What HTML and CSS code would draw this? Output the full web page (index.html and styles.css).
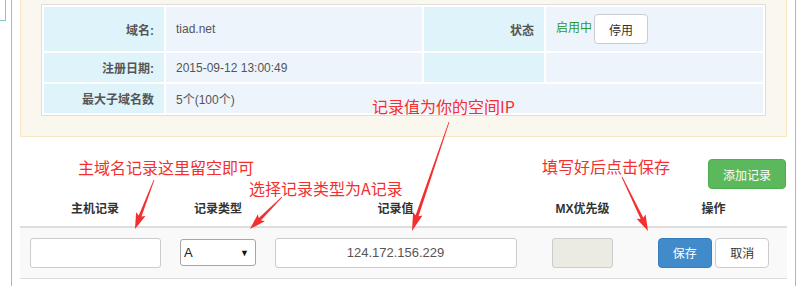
FILE: index.html
```html
<!DOCTYPE html>
<html lang="zh">
<head>
    <meta charset="UTF-8">
    <title>域名解析</title>
    <link rel="stylesheet" href="styles.css">
</head>
<body>
    <div class="page">
        <!-- 左侧边线 -->
        <div class="gutter"><div class="stub"></div></div>

        <div class="main">
            <!-- 域名信息 -->
            <div class="panel">
                <table class="info">
                    <tr class="tall">
                        <th class="c1">域名:</th>
                        <td class="c2">tiad.net</td>
                        <th class="c3">状态</th>
                        <td class="c4"><span class="on">启用中</span><button class="btn btn-default">停用</button></td>
                    </tr>
                    <tr>
                        <th>注册日期:</th>
                        <td>2015-09-12 13:00:49</td>
                        <th></th>
                        <td></td>
                    </tr>
                    <tr>
                        <th>最大子域名数</th>
                        <td colspan="3">5个(100个)</td>
                    </tr>
                </table>
            </div>

            <!-- 解析记录 -->
            <div class="toolbar">
                <button class="btn btn-success">添加记录</button>
            </div>
            <table class="records">
                <thead>
                    <tr>
                        <th class="r1">主机记录</th>
                        <th class="r2">记录类型</th>
                        <th class="r3">记录值</th>
                        <th class="r4">MX优先级</th>
                        <th class="r5">操作</th>
                    </tr>
                </thead>
                <tbody>
                    <tr>
                        <td><input type="text" class="field host"></td>
                        <td><div class="select"><span>A</span><span class="caret">▼</span></div></td>
                        <td><input type="text" class="field value" value="124.172.156.229"></td>
                        <td><input type="text" class="field mx" disabled></td>
                        <td>
                            <button class="btn btn-primary">保存</button>
                            <button class="btn btn-default">取消</button>
                        </td>
                    </tr>
                </tbody>
            </table>
        </div>
        <div class="edge"></div>

        <!-- 标注 -->
        <div class="note n1">记录值为你的空间IP</div>
        <div class="note n2">主域名记录这里留空即可</div>
        <div class="note n3">选择记录类型为A记录</div>
        <div class="note n4">填写好后点击保存</div>
        <svg class="arrows" width="796" height="286" viewBox="0 0 796 286">
            <polygon points="449.4,122.1 418.6,216.3 422.5,215.6 412,231 413.1,212.3 415.6,215.3 448.6,121.9"/>
            <polygon points="154.4,180.1 141.5,216.5 145.5,215.9 135,229 136.1,212.3 138.7,215.4 153.6,179.9"/>
            <polygon points="282.3,197.3 261,220.2 264.8,221.2 250,229 257.8,214.2 258.8,218 281.7,196.7"/>
            <polygon points="622.4,176.8 643.3,217.7 645.6,214.4 648,231 636.6,218.8 640.6,219 621.6,177.2"/>
        </svg>
    </div>
</body>
</html>
```

FILE: styles.css
```css
* {
    margin: 0;
    padding: 0;
    box-sizing: border-box;
}

body {
    font-family: 'Liberation Sans', 'Noto Sans CJK SC', sans-serif;
    font-size: 12px;
    color: #555;
    background: #fff;
    width: 796px;
    height: 286px;
    overflow: hidden;
}

.page {
    position: relative;
    display: flex;
    height: 286px;
}

/* 左右边线 */
.gutter {
    width: 12px;
    border-right: 1px solid #88c4cc;
}

.stub {
    width: 6px;
    height: 21px;
    border-right: 1px solid #88c4cc;
    border-bottom: 1px solid #88c4cc;
}

.edge {
    width: 1px;
    background: #88c4cc;
}

.main {
    flex: 1;
    padding: 0 8px;
}

/* 域名信息面板 */
.panel {
    background: #faf7ef;
    border: 1px solid #fbe6c4;
    border-top: none;
    padding: 4px 20px 20px 20px;
}

.info {
    width: 725px;
    background: #fff;
    border: 1px solid #dedede;
    border-spacing: 2px;
}

.info th,
.info td {
    height: 29px;
    padding: 0 10px;
    font-size: 12px;
}

.info tr.tall th,
.info tr.tall td {
    height: 44px;
}

.info th {
    background: #dff3fb;
    color: #555;
    text-align: right;
    font-weight: bold;
}

.info td {
    background: #eef4fc;
    color: #555;
    text-align: left;
}

.info .c1 { width: 120px; }
.info .c2 { width: 256px; }
.info .c3 { width: 120px; }
.info .c4 { width: 217px; }

.on {
    color: #2f962f;
    margin-right: 2px;
}

/* 按钮 */
.btn {
    display: inline-block;
    height: 30px;
    padding: 0 14px;
    border: 1px solid #ccc;
    border-radius: 4px;
    background: #fff;
    color: #333;
    font-family: 'Liberation Sans', 'Noto Sans CJK SC', sans-serif;
    font-size: 12px;
    vertical-align: middle;
    cursor: pointer;
}

.btn-success {
    width: 78px;
    padding: 0;
    background: #5cb85c;
    border-color: #4cae4c;
    color: #fff;
}

.btn-primary {
    background: #428bca;
    border-color: #357ebd;
    color: #fff;
}

.btn + .btn {
    margin-left: 0;
}

.records .btn {
    width: 54px;
    padding: 0;
}

.toolbar {
    display: flex;
    justify-content: flex-end;
    padding: 22px 1px 0 0;
}

/* 解析记录表 */
.records {
    width: 767px;
    border-collapse: collapse;
}

.records th {
    height: 38px;
    font-weight: bold;
    color: #333;
    text-align: center;
    border-bottom: 2px solid #ddd;
}

.records td {
    height: 51px;
    background: #f9f9f9;
    text-align: center;
    border-bottom: 1px solid #ddd;
}

.records .r1 { width: 150px; }
.records .r2 { width: 96px; }
.records .r3 { width: 259px; }
.records .r4 { width: 115px; }
.records .r5 { width: 147px; }

.field {
    height: 30px;
    border: 1px solid #ccc;
    border-radius: 3px;
    background: #fff;
    color: #555;
    font-family: 'Liberation Sans', 'Noto Sans CJK SC', sans-serif;
    font-size: 13px;
    vertical-align: middle;
}

.host { width: 131px; }

.value {
    width: 242px;
    text-align: center;
}

.mx {
    width: 61px;
    background: #ebebe4;
}

.select {
    display: inline-flex;
    justify-content: space-between;
    align-items: center;
    width: 76px;
    height: 27px;
    padding: 0 6px 0 3px;
    border: 1px solid #a6a6a6;
    border-radius: 3px;
    background: #fff;
    color: #222;
    font-size: 13px;
    vertical-align: middle;
}

.caret {
    font-size: 9px;
    color: #111;
}

/* 标注 */
.note {
    position: absolute;
    color: #f42f2f;
    font-family: 'Noto Sans CJK SC', sans-serif;
    font-size: 16px;
    line-height: 16px;
    white-space: nowrap;
}

.n1 { left: 372px; top: 98px; }
.n2 { left: 78px; top: 159px; }
.n3 { left: 249px; top: 180px; }
.n4 { left: 542px; top: 158px; }

.arrows {
    position: absolute;
    left: 0;
    top: 0;
    pointer-events: none;
}

.arrows polygon {
    fill: #f42f2f;
}
```
